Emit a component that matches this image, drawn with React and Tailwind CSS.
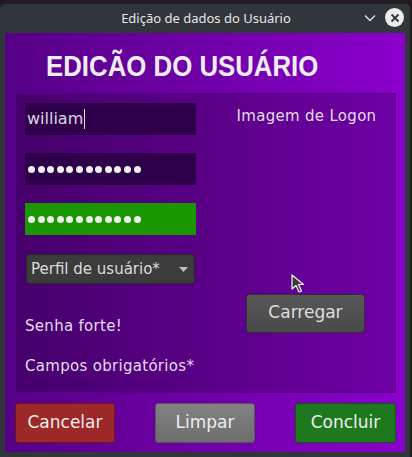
import React from 'react';

const appFont = { fontFamily: '"DejaVu Sans", "Liberation Sans", sans-serif' };

// small pointer drawn over the panel, as in the screenshot
const MouseCursor = () => (
  <svg className="absolute left-[275px] top-[180px]" width="14" height="20" viewBox="0 0 14 20">
    <path d="M1 1 L1 15 L5 11.5 L8 18 L10.5 17 L7.5 10.5 L12.5 10.5 Z" fill="#3c3c3c" stroke="#f2f2f2" strokeWidth="1.2" strokeLinejoin="round" />
  </svg>
);

const PasswordDots = () => (
  <div className="flex gap-[2.6px]">
    {Array.from({ length: 12 }).map((_, i) => (
      <span key={i} className="w-[7px] h-[7px] rounded-full bg-[#eeeeee]" />
    ))}
  </div>
);

function App() {
  return (
    <div className="w-[412px] h-[457px] bg-[#221b22] pt-[4px] overflow-hidden" style={appFont}>
      <div className="w-[410px] h-[453px] bg-[#31363b] rounded-t-[5px] flex flex-col">
        {/* Title bar */}
        <div className="h-[29px] flex items-center relative">
          <span className="flex-1 text-center text-[13px] text-[#e6e6e6] pl-[2px]" style={{ fontFamily: '"Noto Sans", sans-serif' }}>
            Edição de dados do Usuário
          </span>
          <div className="absolute right-[6px] top-[4px] flex items-center gap-[9px]">
            <svg width="12" height="8" viewBox="0 0 12 8">
              <path d="M1 1.5 L6 6.5 L11 1.5" fill="none" stroke="#e0e0e0" strokeWidth="1.4" />
            </svg>
            <div className="w-[19px] h-[19px] rounded-full bg-[#ececec] flex items-center justify-center">
              <svg width="10" height="10" viewBox="0 0 10 10">
                <path d="M1.5 1.5 L8.5 8.5 M8.5 1.5 L1.5 8.5" stroke="#31363b" strokeWidth="1.8" />
              </svg>
            </div>
          </div>
        </div>

        {/* Window body */}
        <div className="ml-[5px] w-[400px] h-[419px] bg-gradient-to-r from-[#560086] to-[#8a00cc] flex flex-col">
          <div className="h-[60px] pl-[41px] pt-[18px]">
            <h1
              className="inline-block origin-left scale-x-[0.86] whitespace-nowrap text-[30px] font-bold text-[#f0ecf4] leading-[30px]"
              style={{ fontFamily: '"Liberation Sans", sans-serif' }}
            >
              EDICÃO DO USUÁRIO
            </h1>
          </div>

          <div className="relative ml-[10px] w-[381px] h-[300px] bg-gradient-to-r from-[#46006b] to-[#6e00a4] border border-[#5a0090] flex">
            <div className="w-[200px] pl-[9px] pt-[9px] flex flex-col tracking-[0.3px]">
              <div className="w-[171px] h-[32px] bg-[#2e0049] flex items-center pl-[2px] text-[16px] tracking-normal text-[#ddd4e6]">
                william<span className="w-[1px] h-[20px] bg-[#e0d8e8] ml-[1px]" />
              </div>
              <div className="mt-[18px] w-[171px] h-[32px] bg-[#2e0049] flex items-center pl-[3px]">
                <PasswordDots />
              </div>
              <div className="mt-[18px] w-[171px] h-[32px] bg-[#1a9600] flex items-center pl-[3px]">
                <PasswordDots />
              </div>
              <div className="mt-[19px] ml-[1px] w-[169px] h-[30px] bg-[#3b3b3b] border border-[#262626] rounded-[3px] flex items-center justify-between pl-[4px] pr-[6px] text-[15px] tracking-normal text-[#dcdcdc]">
                <span>Perfil de usuário*</span>
                <svg width="9" height="5" viewBox="0 0 9 5">
                  <path d="M0 0 L9 0 L4.5 5 Z" fill="#bdbdbd" />
                </svg>
              </div>
              <div className="mt-[31px] text-[15px] text-[#e4dcec]">Senha forte!</div>
              <div className="mt-[17px] text-[15px] text-[#e4dcec]">Campos obrigatórios*</div>
            </div>

            <div className="flex-1 flex flex-col items-center">
              <div className="mt-[11px] ml-[2px] text-[15px] tracking-[0.3px] text-[#e4dcec]">Imagem de Logon</div>
              <button className="mt-[166px] w-[119px] h-[39px] bg-gradient-to-b from-[#575757] to-[#4a4a4a] border border-[#303030] rounded-[3px] text-[17px] text-[#dedede]">
                Carregar
              </button>
            </div>

            <MouseCursor />
          </div>

          <div className="mt-[10px] ml-[10px] w-[381px] flex justify-between">
            <button className="w-[100px] h-[40px] bg-[#9c2828] border border-[#6e1818] rounded-[3px] text-[17px] text-[#eeeeee]">
              Cancelar
            </button>
            <button className="w-[100px] h-[40px] bg-gradient-to-b from-[#828282] to-[#6e6e6e] border border-[#555555] rounded-[3px] text-[17px] text-[#eeeeee]">
              Limpar
            </button>
            <button className="w-[101px] h-[40px] bg-[#1e781e] border border-[#125212] rounded-[3px] text-[17px] text-[#eeeeee]">
              Concluir
            </button>
          </div>
        </div>
      </div>
    </div>
  );
}

export default App;
